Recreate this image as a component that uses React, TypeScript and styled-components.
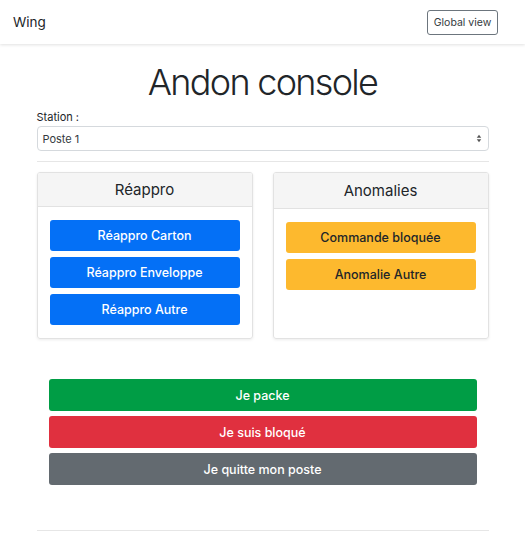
import styled, { createGlobalStyle } from 'styled-components';

const GlobalStyle = createGlobalStyle`
  * {
    box-sizing: border-box;
  }

  body {
    margin: 0;
    background: #ffffff;
    font-family: Inter, "Liberation Sans", sans-serif;
    color: #212529;
  }
`;

type Variant = 'primary' | 'warning' | 'success' | 'danger' | 'secondary';

const COLORS: Record<Variant, { bg: string; fg: string }> = {
  primary: { bg: '#0470f6', fg: '#ffffff' },
  warning: { bg: '#fdb92e', fg: '#212529' },
  success: { bg: '#009d45', fg: '#ffffff' },
  danger: { bg: '#e0303f', fg: '#ffffff' },
  secondary: { bg: '#636a70', fg: '#ffffff' },
};

const App = () => {
  return (
    <>
      <GlobalStyle />
      <Navbar>
        <Brand>Wing</Brand>
        <OutlineButton>Global view</OutlineButton>
      </Navbar>
      <Container>
        <Title>Andon console</Title>
        <Label>Station :</Label>
        <SelectBox>
          <span>Poste 1</span>
          <Arrows viewBox="0 0 8 12">
            <path d="M4 1 L7 5 H1 Z" fill="#555" />
            <path d="M4 11 L7 7 H1 Z" fill="#555" />
          </Arrows>
        </SelectBox>
        <Divider />
        <CardRow>
          <Card>
            <CardHeader>Réappro</CardHeader>
            <CardBody>
              <ActionButton $variant="primary">Réappro Carton</ActionButton>
              <ActionButton $variant="primary">Réappro Enveloppe</ActionButton>
              <ActionButton $variant="primary">Réappro Autre</ActionButton>
            </CardBody>
          </Card>
          <Card>
            <CardHeader>Anomalies</CardHeader>
            <CardBody>
              <ActionButton $variant="warning">Commande bloquée</ActionButton>
              <ActionButton $variant="warning">Anomalie Autre</ActionButton>
            </CardBody>
          </Card>
        </CardRow>
        <StatusList>
          <StatusButton $variant="success">Je packe</StatusButton>
          <StatusButton $variant="danger">Je suis bloqué</StatusButton>
          <StatusButton $variant="secondary">Je quitte mon poste</StatusButton>
        </StatusList>
        <BottomDivider />
      </Container>
    </>
  );
};

export default App;

const Navbar = styled.nav`
  height: 44px;
  padding: 0 27px 0 13px;
  display: flex;
  align-items: center;
  justify-content: space-between;
  background: #ffffff;
  box-shadow: 0 1px 3px rgba(0, 0, 0, 0.12);
`;

const Brand = styled.span`
  font-size: 13.5px;
  color: #212529;
`;

const OutlineButton = styled.button`
  height: 25px;
  width: 71px;
  padding: 0;
  border: 1px solid #6c757d;
  border-radius: 3px;
  background: #ffffff;
  font-family: inherit;
  font-size: 10.5px;
  color: #343a40;
`;

const Container = styled.main`
  width: 452px;
  margin: 0 auto;
`;

const Title = styled.h1`
  margin: 14px 0 3px;
  font-size: 36px;
  font-weight: 300;
  letter-spacing: -1.7px;
  line-height: 48px;
  text-align: center;
  color: #212529;
`;

const Label = styled.div`
  font-size: 11px;
  line-height: 16px;
  margin-bottom: 1px;
`;

const SelectBox = styled.div`
  height: 25px;
  padding: 0 6px 0 5px;
  display: flex;
  align-items: center;
  justify-content: space-between;
  border: 1px solid #d5d9dd;
  border-radius: 4px;
  font-size: 11px;
  color: #343a40;
`;

const Arrows = styled.svg`
  width: 6px;
  height: 9px;
`;

const Divider = styled.hr`
  margin: 10px 0 10px;
  border: 0;
  border-top: 1px solid #e6e6e6;
`;

const CardRow = styled.div`
  display: grid;
  grid-template-columns: 1fr 1fr;
  gap: 20px;
`;

const Card = styled.section`
  height: 167px;
  display: flex;
  flex-direction: column;
  border: 1px solid #e2e2e2;
  border-radius: 3px;
  box-shadow: 0 1px 3px rgba(0, 0, 0, 0.08);
  overflow: hidden;
`;

const CardHeader = styled.header`
  height: 36px;
  display: flex;
  align-items: center;
  justify-content: center;
  background: #f5f5f5;
  border-bottom: 1px solid #e2e2e2;
  font-size: 15px;
  color: #212529;
`;

const CardBody = styled.div`
  padding: 13px 12px;
  display: flex;
  flex-direction: column;
  gap: 6px;
`;

const ActionButton = styled.button<{ $variant: Variant }>`
  height: 31px;
  padding: 0;
  border: 0;
  border-radius: 3px;
  background: ${(p) => COLORS[p.$variant].bg};
  color: ${(p) => COLORS[p.$variant].fg};
  font-family: inherit;
  font-size: 12.5px;
  font-weight: 450;
`;

const StatusList = styled.div`
  margin: 40px 12px 0 12px;
  display: flex;
  flex-direction: column;
  gap: 5px;
`;

const StatusButton = styled(ActionButton)`
  height: 32px;
`;

const BottomDivider = styled.hr`
  margin: 45px 0 0;
  border: 0;
  border-top: 1px solid #e6e6e6;
`;
